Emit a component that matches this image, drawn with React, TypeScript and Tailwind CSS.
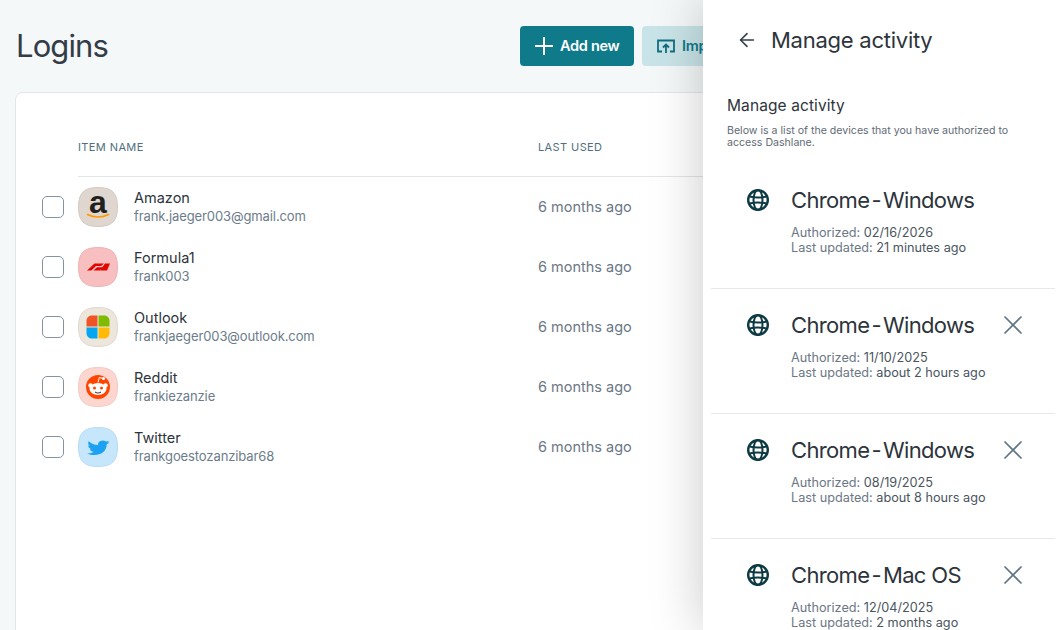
import { X, ArrowLeft } from 'lucide-react';
import { ReactNode } from 'react';

function Tile({ bg, border, children }: { bg: string; border: string; children: ReactNode }) {
    return (
        <svg width="40" height="40" viewBox="0 0 40 40" className="shrink-0 overflow-visible" aria-hidden="true">
            <path d="M20 .5C34 .5 39.5 6 39.5 20S34 39.5 20 39.5 .5 34 .5 20 6 .5 20 .5Z" fill={bg} stroke={border} />
            {children}
        </svg>
    );
}

const LOGOS: Record<string, ReactNode> = {
    amazon: (
        <Tile bg="#ded6cf" border="#d3cbc4">
            <text x="20" y="26" textAnchor="middle" fontSize="32" fontWeight="700" fill="#221f1f" fontFamily="'Liberation Sans', sans-serif">a</text>
            <path d="M9.500 27.500c6 3.400 15 3.400 21 0" fill="none" stroke="#f90" strokeWidth="1.500" strokeLinecap="round" />
        </Tile>
    ),
    f1: (
        <Tile bg="#f7bfbf" border="#f0b4b4">
            <path d="M9 23.500 16.500 16.500H26l-3 2.400h-5l-4.600 4.600Zm6.500 0 3.500-3.200h5.500l-2.800 3.200ZM27 16.500h5l-3 7h-7Z" fill="#e10600" />
        </Tile>
    ),
    outlook: (
        <Tile bg="#ece6dc" border="#e0dacf">
            <path d="M19.500 8.500H14c-3 0-5.500 2-5.500 5.500v5.500h11Z" fill="#f25325" />
            <path d="M20.500 8.500H26c3 0 5.500 2 5.500 5.500v5.500h-11Z" fill="#80bb03" />
            <path d="M19.500 20.500v11H14c-3 0-5.500-2-5.500-5.500v-5.500Z" fill="#05a6f0" />
            <path d="M20.500 20.500h11V26c0 3-2 5.500-5.500 5.500h-5.500Z" fill="#ffba08" />
        </Tile>
    ),
    reddit: (
        <Tile bg="#fdd6d0" border="#f6cbc5">
            <circle cx="20" cy="20" r="12" fill="#ff4500" />
            <circle cx="12.500" cy="18.500" r="2.200" fill="#fff" />
            <circle cx="27.500" cy="18.500" r="2.200" fill="#fff" />
            <ellipse cx="20" cy="22" rx="8.500" ry="6" fill="#fff" />
            <circle cx="16.500" cy="21" r="1.500" fill="#ff4500" />
            <circle cx="23.500" cy="21" r="1.500" fill="#ff4500" />
            <path d="M17 25c2 1.300 4 1.300 6 0" stroke="#5a3a30" strokeWidth="1.100" fill="none" />
            <path d="M20 15.500l1.300-5 3.400.8" stroke="#fff" strokeWidth="1" fill="none" />
            <circle cx="25.500" cy="11.500" r="1.600" fill="#fff" />
        </Tile>
    ),
    twitter: (
        <Tile bg="#c6e6fb" border="#b9dcf3">
            <g transform="translate(0 3.500) scale(1 .8)">
                <path d="M31.500 14.600c-.8.400-1.700.600-2.600.700.900-.600 1.600-1.400 2-2.500-.900.500-1.800.900-2.900 1.100a4.600 4.600 0 0 0-7.800 4.200c-3.800-.200-7.200-2-9.400-4.800-1.200 2.100-.600 4.700 1.400 6.100-.700 0-1.400-.200-2.100-.600 0 2.200 1.600 4.100 3.700 4.600-.700.200-1.400.200-2.100.100.600 1.900 2.300 3.200 4.300 3.200a9.300 9.300 0 0 1-6.800 1.900c8.300 5.300 19.700.400 19.500-11.300.900-.600 1.700-1.400 2.800-2.700Z" fill="#1da1f2" />
            </g>
        </Tile>
    ),
};

const LOGINS = [
    { logo: 'amazon', name: 'Amazon', sub: 'frank.jaeger003@gmail.com' },
    { logo: 'f1', name: 'Formula1', sub: 'frank003' },
    { logo: 'outlook', name: 'Outlook', sub: 'frankjaeger003@outlook.com' },
    { logo: 'reddit', name: 'Reddit', sub: 'frankiezanzie' },
    { logo: 'twitter', name: 'Twitter', sub: 'frankgoestozanzibar68' },
];

const DEVICES = [
    { os: 'Windows', authorized: '02/16/2026', updated: '21 minutes ago', current: true },
    { os: 'Windows', authorized: '11/10/2025', updated: 'about 2 hours ago' },
    { os: 'Windows', authorized: '08/19/2025', updated: 'about 8 hours ago' },
    { os: 'Mac OS', authorized: '12/04/2025', updated: '2 months ago' },
];

function GlobeIcon() {
    return (
        <svg width="24" height="24" viewBox="0 0 24 24" fill="none" stroke="#0e3a43" strokeWidth="2.400" className="mt-[2px] shrink-0" aria-hidden="true">
            <circle cx="12" cy="12" r="9.800" />
            <ellipse cx="12" cy="12" rx="4.500" ry="10" strokeWidth="2" />
            <path d="M3.500 8.500c5 1.300 12 1.300 17 0M3.500 15.500c5-1.300 12-1.300 17 0" strokeWidth="2" />
        </svg>
    );
}

export default function App() {
    return (
        <div className="relative h-[630px] w-[1063px] overflow-hidden bg-[#f4f8f9] font-['Inter','Noto_Sans',sans-serif]">
            <div className="flex h-[92px] items-center pl-[16px]">
                <h1 className="w-[504px] text-[31px] leading-10 text-[#333c47] tracking-[-0.9px]">Logins</h1>
                <button className="flex h-10 w-[114px] items-center gap-[7px] rounded bg-[#0e7a8a] pl-[15px] text-[14.500px] font-semibold tracking-[-0.3px] text-white">
                    <svg width="18" height="18" viewBox="0 0 18 18" stroke="currentColor" strokeWidth="2" aria-hidden="true">
                        <path d="M9 0v18M0 9h18" />
                    </svg>
                    Add new
                </button>
                <button className="ml-2 flex h-10 w-[130px] items-center gap-[6px] rounded bg-[#c9e4e8] pl-[14px] text-[14.500px] font-semibold tracking-[-0.3px] text-[#0e7a8a]">
                    <svg width="20" height="20" viewBox="0 0 20 20" fill="none" stroke="#0e6f80" strokeWidth="1.800" aria-hidden="true">
                        <path d="M6 15.500H2v-11h16v11h-4M10 17V9M7 11.500l3-3 3 3" />
                    </svg>
                    Import
                </button>
            </div>

            <div className="ml-[15px] h-[560px] w-[1100px] rounded-t-lg border border-[#e3e6e8] bg-white pl-[62px]">
                <div className="flex h-[84px] items-center border-b border-[#e3e6e8] pt-[26px] text-[11px] font-normal tracking-[0.4px] text-[#4f6f80]">
                    <span className="w-[460px]">ITEM NAME</span>
                    <span>LAST USED</span>
                </div>
                {LOGINS.map((l) => (
                    <div key={l.name} className="relative flex h-[60px] items-center">
                        <span className="absolute left-[-36px] h-[22px] w-[22px] rounded-[5px] border border-[#83949f] bg-white" />
                        {LOGOS[l.logo]}
                        <div className="ml-4 w-[404px] pb-[2px]">
                            <div className="text-[14.500px] leading-[20px] text-[#2d343b]">{l.name}</div>
                            <div className="text-[13px] leading-[17px] tracking-[-0.1px] text-[#6b7c8a]">{l.sub}</div>
                        </div>
                        <span className="text-[14.500px] text-[#6b7785]">6 months ago</span>
                    </div>
                ))}
            </div>

            {/* Side drawer */}
            <div className="absolute inset-y-0 left-[703px] right-0 bg-white pr-2 pl-2 shadow-[0_0_50px_rgba(0,0,0,0.22)]">
                <div className="flex h-[80px] items-center pl-[25px]">
                    <ArrowLeft size={22} strokeWidth={1.700} className="text-[#333c47]" />
                    <span className="ml-[13px] text-[22px] tracking-[-0.25px] text-[#2d343b]">Manage activity</span>
                </div>
                <div className="pl-4">
                    <h2 className="mt-[15px] text-[15.500px] font-normal leading-[22px] tracking-[0.1px] text-[#2d343b]">Manage activity</h2>
                    <p className="mt-[8px] w-[300px] text-[10.600px] leading-[12px] text-[#5f6b76]">
                        Below is a list of the devices that you have authorized to access Dashlane.
                    </p>
                </div>
                <div className="mt-[15px]">
                    {DEVICES.map((d, i) => (
                        <div key={i} className="flex h-[125px] items-start border-b border-[#e5e8ea] pl-[35px] pt-[22px]">
                            <GlobeIcon />
                            <div className="ml-[21px] w-[206px] shrink-0">
                                <div className="text-[22px] leading-[28px] tracking-[-0.65px] text-[#2d343b]">
                                    Chrome<span className="[word-spacing:-3.5px]"> - </span>{d.os}
                                </div>
                                <div className="mt-[11px] text-[12.700px] leading-[15px] text-[#6b7785]">
                                    Authorized: <span className="text-[#4a5560]">{d.authorized}</span>
                                </div>
                                <div className="text-[12.700px] leading-[15px] text-[#6b7785]">
                                    Last updated: <span className="text-[#4a5560]">{d.updated}</span>
                                </div>
                            </div>
                            {!d.current && <X size={32} strokeWidth={1.300} className="mt-[-2px] text-[#5f7585]" />}
                        </div>
                    ))}
                </div>
            </div>
        </div>
    );
}
